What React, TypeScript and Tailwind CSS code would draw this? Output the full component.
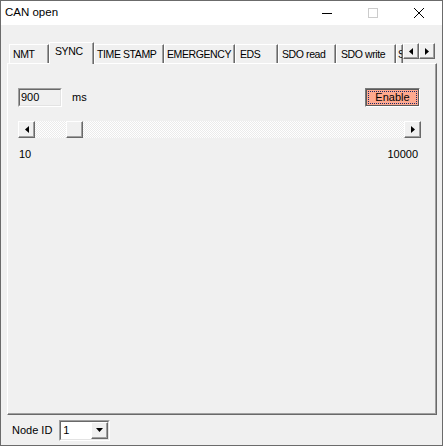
import React from "react";

const tabs = [
  { label: "NMT", w: "w-[40px]", pl: "pl-[3px]" },
  { label: "SYNC", w: "w-[45px]", pl: "pl-[5px]", active: true },
  { label: "TIME STAMP", w: "w-[70px]", pl: "pl-[2px]" },
  { label: "EMERGENCY", w: "w-[71px]", pl: "pl-[2px]" },
  { label: "EDS", w: "w-[43px]", pl: "pl-[4px]" },
  { label: "SDO read", w: "w-[58px]", pl: "pl-[3px]" },
  { label: "SDO write", w: "w-[60px]", pl: "pl-[4px]" },
  { label: "SDO", w: "w-[7px]", pl: "pl-[1px]" },
];

const raised =
  "border border-t-white border-l-white border-r-[#696969] border-b-[#696969] shadow-[inset_-1px_-1px_#a0a0a0] bg-[#f0f0f0]";

function Arrow({ dir }: { dir: "left" | "right" | "down" }) {
  if (dir === "down")
    return (
      <svg width="7" height="4" viewBox="0 0 7 4">
        <path d="M0 0h7L3.5 4z" fill="#000" />
      </svg>
    );
  return (
    <svg width="4" height="7" viewBox="0 0 4 7">
      <path d={dir === "left" ? "M4 0v7L0 3.5z" : "M0 0v7L4 3.5z"} fill="#000" />
    </svg>
  );
}

function TitleBar() {
  return (
    <div className="h-[24px] bg-white flex items-center justify-between shrink-0">
      <span className="pl-[4px] text-[11.5px] text-black">CAN open</span>
      <div className="flex h-full">
        <div className="w-[46px] h-full flex items-center justify-center">
          <div className="w-[10px] h-px bg-black" />
        </div>
        <div className="w-[46px] h-full flex items-center justify-center">
          <div className="w-[10px] h-[10px] border border-[#cccccc]" />
        </div>
        <div className="w-[46px] h-full flex items-center justify-center">
          <svg width="10" height="10" viewBox="0 0 10 10">
            <path d="M0 0L10 10M10 0L0 10" stroke="#000" strokeWidth="1" />
          </svg>
        </div>
      </div>
    </div>
  );
}

function TabRow() {
  return (
    <div className="flex items-end h-[21px] pl-[2px] shrink-0 text-[10.5px] tracking-[-0.4px]">
      {tabs.map((t) =>
        t.active ? (
          <div
            key={t.label}
            className={`${t.w} h-[22px] -mb-px relative z-10 bg-[#f0f0f0] border-t border-l border-white border-r border-r-[#696969] shadow-[inset_-1px_0_#a0a0a0] ${t.pl} pt-[2px] leading-[13px] overflow-hidden whitespace-nowrap`}
          >
            {t.label}
          </div>
        ) : (
          <div
            key={t.label}
            className={`${t.w} h-[19px] border-t border-l border-white border-r border-r-[#696969] shadow-[inset_-1px_0_#a0a0a0] ${t.pl} pt-[3px] leading-[13px] overflow-hidden whitespace-nowrap`}
          >
            {t.label}
          </div>
        )
      )}
      <div className="self-start mt-px flex">
        <div className={`w-[16px] h-[16px] ${raised} flex items-center justify-center`}>
          <Arrow dir="left" />
        </div>
        <div className={`w-[16px] h-[16px] ${raised} flex items-center justify-center`}>
          <Arrow dir="right" />
        </div>
      </div>
    </div>
  );
}

function SyncPage() {
  const min = 10;
  const max = 10000;
  const value = 900;
  const trackRange = 351;
  const offset = Math.round(((value - min) / (max - min)) * trackRange);

  return (
    <div className="flex flex-col pt-[24px] pl-[10px] pr-[15px]">
      <div className="flex items-center justify-between h-[19px]">
        <div className="flex items-center gap-[10px]">
          <div className="w-[44px] h-[19px] border border-t-[#a0a0a0] border-l-[#a0a0a0] border-r-white border-b-white">
            <div className="w-full h-full border border-t-[#696969] border-l-[#696969] border-r-[#e3e3e3] border-b-[#e3e3e3] bg-[#f0f0f0] pl-[1px] leading-[15px]">
              {value}
            </div>
          </div>
          <span className="leading-[13px]">ms</span>
        </div>
        <div className="mr-[1px] w-[55px] h-[19px] border border-t-[#7a7a7a] border-l-[#7a7a7a] border-r-white border-b-white">
          <div className="w-full h-full border border-[#5a5a5a] bg-[#ffa98f] p-px">
            <div className="w-full h-full border border-dotted border-[#1a2a6a] flex items-center justify-center leading-[13px]">
              Enable
            </div>
          </div>
        </div>
      </div>

      <div className="mt-[14px] h-[17px] flex">
        <div className={`w-[17px] h-[17px] ${raised} flex items-center justify-center`}>
          <Arrow dir="left" />
        </div>
        <div className="flex-1 flex bg-[repeating-conic-gradient(#ffffff_0%_25%,#ebebeb_0%_50%)] [background-size:2px_2px]">
          <div style={{ width: offset }} />
          <div className={`w-[17px] h-[17px] ${raised}`} />
        </div>
        <div className={`w-[17px] h-[17px] ${raised} flex items-center justify-center`}>
          <Arrow dir="right" />
        </div>
      </div>

      <div className="mt-[10px] flex justify-between leading-[13px] pl-px pr-[3px]">
        <span>{min}</span>
        <span>{max}</span>
      </div>
    </div>
  );
}

export default function App() {
  return (
    <div
      className="w-[443px] h-[446px] flex flex-col border border-[#6b6b6b] bg-[#f0f0f0] text-[11px] text-black"
      style={{ fontFamily: '"Liberation Sans", Arial, sans-serif' }}
    >
      <TitleBar />
      <div className="flex-1 flex flex-col pt-[17px] pl-[6px] pr-[5px]">
        <TabRow />
        <div className="h-[352px] border border-t-white border-l-white border-r-[#696969] border-b-[#696969] shadow-[inset_-1px_-1px_#a0a0a0] shrink-0">
          <SyncPage />
        </div>
        <div className="h-[30px] flex items-center pl-[5px] gap-[7px]">
          <span className="leading-[13px]">Node ID</span>
          <div className="w-[51px] h-[21px] border border-t-[#a0a0a0] border-l-[#a0a0a0] border-r-white border-b-white">
            <div className="w-full h-full border border-t-[#696969] border-l-[#696969] border-r-[#e3e3e3] border-b-[#e3e3e3] bg-white flex items-stretch">
              <span className="flex-1 pl-[2px] leading-[17px]">1</span>
              <div className={`w-[17px] ${raised} flex items-center justify-center`}>
                <Arrow dir="down" />
              </div>
            </div>
          </div>
        </div>
      </div>
    </div>
  );
}
